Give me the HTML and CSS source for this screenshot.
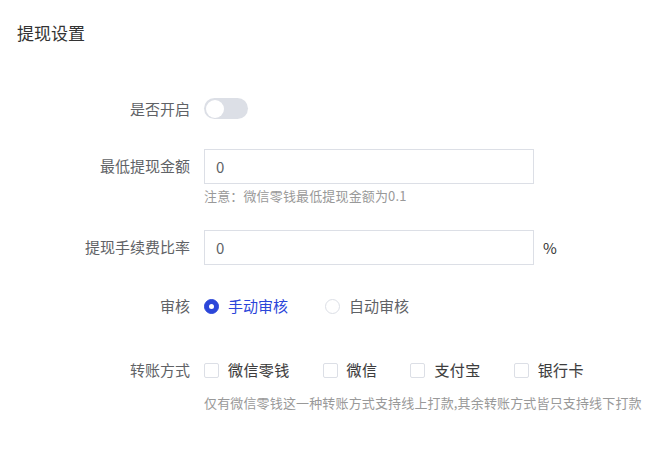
FILE: index.html
```html
<!DOCTYPE html>
<html>
<head>
<meta charset="utf-8">
<link rel="stylesheet" href="styles.css">
</head>
<body>
<div class="page">
  <h1 class="title">提现设置</h1>
  <div class="form">
    <div class="row row-switch">
      <div class="label">是否开启</div>
      <div class="ctrl"><span class="switch"><span class="knob"></span></span></div>
    </div>
    <div class="row row-input">
      <div class="label">最低提现金额</div>
      <div class="ctrl col">
        <div class="input">0</div>
        <div class="tip">注意：微信零钱最低提现金额为0.1</div>
      </div>
    </div>
    <div class="row row-input2">
      <div class="label">提现手续费比率</div>
      <div class="ctrl">
        <div class="input">0</div>
        <span class="unit">%</span>
      </div>
    </div>
    <div class="row row-radio">
      <div class="label">审核</div>
      <div class="ctrl">
        <span class="radio checked"><span class="dot"></span><span class="rtext">手动审核</span></span>
        <span class="radio"><span class="dot"></span><span class="rtext">自动审核</span></span>
      </div>
    </div>
    <div class="row row-check">
      <div class="label">转账方式</div>
      <div class="ctrl col">
        <div class="checks">
          <span class="check"><span class="box"></span><span class="ctext">微信零钱</span></span>
          <span class="check"><span class="box"></span><span class="ctext">微信</span></span>
          <span class="check"><span class="box"></span><span class="ctext">支付宝</span></span>
          <span class="check"><span class="box"></span><span class="ctext">银行卡</span></span>
        </div>
        <div class="tip help">仅有微信零钱这一种转账方式支持线上打款,其余转账方式皆只支持线下打款</div>
      </div>
    </div>
  </div>
</div>
</body>
</html>
```
FILE: styles.css
```css
* { box-sizing: border-box; }
html, body { margin: 0; padding: 0; background: #fff; }
body {
  font-family: "Noto Sans CJK SC", "Noto Sans", sans-serif;
  color: #606266;
  font-size: 15px;
}
.page { padding: 21px 0 0 17px; }
.title {
  margin: 0;
  font-size: 17px;
  line-height: 24px;
  font-weight: 400;
  color: #333;
}
.form { margin-left: -17px; margin-top: 53px; }
.row { display: flex; align-items: flex-start; }
.label {
  width: 190px;
  text-align: right;
  color: #606266;
  flex: none;
}
.ctrl { margin-left: 14px; display: flex; align-items: center; }
.ctrl.col { flex-direction: column; align-items: flex-start; }

.row-switch .label { line-height: 22px; }
.switch {
  display: block;
  width: 44px;
  height: 21px;
  border-radius: 11px;
  background: #dcdfe6;
  position: relative;
}
.knob {
  position: absolute;
  left: 2px;
  top: 1.5px;
  width: 18px;
  height: 18px;
  border-radius: 50%;
  background: #fff;
}

.row-input { margin-top: 29px; }
.row-input .label, .row-input2 .label { line-height: 34px; }
.input {
  width: 330px;
  height: 35px;
  border: 1px solid #dcdfe6;
  padding: 0 11px;
  line-height: 33px;
  color: #606266;
  font-size: 15px;
}
.tip {
  font-size: 13px;
  color: #999;
  line-height: 18px;
  margin-top: 3px;
  letter-spacing: 0.15px;
}
.row-input2 { margin-top: 25px; }
.unit { margin-left: 9px; color: #333; font-size: 15px; }

.row-radio { margin-top: 30px; }
.row-radio .label, .row-radio .ctrl { line-height: 22px; }
.radio { display: inline-flex; align-items: center; margin-right: 37px; }
.radio .dot {
  width: 15px;
  height: 15px;
  border-radius: 50%;
  border: 1px solid #dcdfe6;
  background: #fff;
  margin-right: 9px;
  position: relative;
}
.radio.checked .dot { background: #2b46d9; border-color: #2b46d9; }
.radio.checked .dot::after {
  content: "";
  position: absolute;
  left: 50%; top: 50%;
  width: 5px; height: 5px;
  margin: -2.5px 0 0 -2.5px;
  border-radius: 50%;
  background: #fff;
}
.radio.checked .rtext { color: #2b46d9; }
.rtext { color: #606266; }

.row-check { margin-top: 42px; }
.row-check .label { line-height: 22px; }
.checks { display: flex; align-items: center; line-height: 22px; }
.check { display: inline-flex; align-items: center; margin-right: 33px; }
.box {
  width: 15px;
  height: 15px;
  border: 1px solid #dcdfe6;
  border-radius: 2px;
  margin-right: 9px;
  background: #fff;
}
.ctext { color: #3d3d3d; font-weight: 400; letter-spacing: 0.4px; -webkit-text-stroke: 0.1px #3d3d3d; }
.help { margin-top: 13px; }
```
